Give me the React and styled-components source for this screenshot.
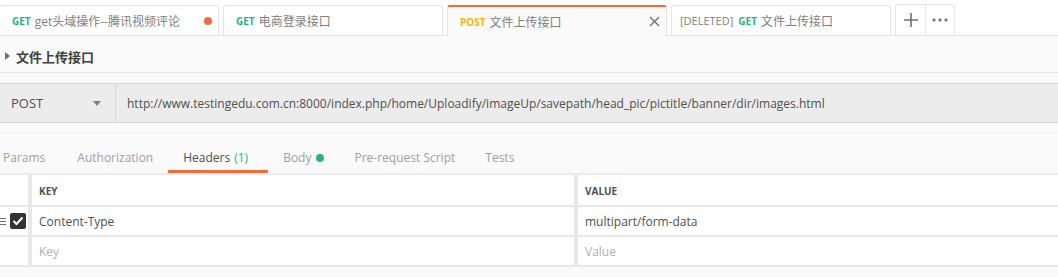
import React from 'react'
import styled, { createGlobalStyle } from 'styled-components'

const GlobalStyle = createGlobalStyle`
  body {
    margin: 0;
    background: #fafafa;
    font-family: "Open Sans", "Noto Sans CJK SC", sans-serif;
    overflow: hidden;
  }
`

const Page = styled.div`
  width: 1058px;
  height: 277px;
  background: #fafafa;
  overflow: hidden;
`

const TabBar = styled.div`
  display: flex;
  align-items: flex-end;
  height: 36px;
  padding-top: 6px;
  box-sizing: border-box;
  background: #fff;
  border-bottom: 1px solid #e4e4e4;
  margin-left: -1px;
`

const Tab = styled.div`
  display: flex;
  align-items: center;
  width: 220px;
  height: ${p => (p.active ? 31 : 30)}px;
  margin-bottom: ${p => (p.active ? -1 : 0)}px;
  margin-right: 4px;
  box-sizing: border-box;
  padding: 0 6px 0 ${p => (p.deleted ? 8 : 12)}px;
  background: ${p => (p.active ? '#fafafa' : '#fff')};
  border: 1px solid #e4e4e4;
  border-bottom: none;
  border-top: ${p => (p.active ? '2px solid #f26b3a' : '1px solid #e4e4e4')};
  border-radius: 3px 3px 0 0;
  white-space: nowrap;
`

const Method = styled.span`
  font-size: 10px;
  font-weight: 700;
  color: ${p => p.color};
  margin-right: 4px;
`

const Deleted = styled.span`
  color: #808080;
  font-size: 11px;
  margin-right: 5px;
`

const TabName = styled.span`
  flex: 1;
  font-size: 12px;
  color: #808080;
`

const Dot = styled.span`
  width: 8px;
  height: 8px;
  border-radius: 50%;
  background: ${p => p.color};
  display: inline-block;
  margin-left: ${p => p.gap || 0}px;
`

const Close = styled.span`
  display: flex;
`

const ActionGroup = styled.div`
  display: flex;
  height: 30px;
  border: 1px solid #e4e4e4;
  border-bottom: none;
  border-radius: 3px 3px 0 0;
  background: #fff;
`

const ActionButton = styled.div`
  width: ${p => p.w}px;
  display: flex;
  align-items: center;
  justify-content: center;
  border-right: ${p => (p.divider ? '1px solid #e4e4e4' : 'none')};
`

const TitleRow = styled.div`
  display: flex;
  align-items: center;
  height: 37px;
  padding: 4px 0 0 5px;
  border-bottom: 1px solid #e4e4e4;
  box-sizing: border-box;
`

const Caret = styled.span`
  width: 0;
  height: 0;
  border-top: 4px solid transparent;
  border-bottom: 4px solid transparent;
  border-left: 5px solid #707070;
  margin-right: 6px;
`

const Title = styled.span`
  font-size: 13px;
  font-weight: 700;
  color: #404040;
`

const UrlBar = styled.div`
  display: flex;
  height: 40px;
  margin-top: 10px;
  box-sizing: border-box;
  background: #ececec;
  border-top: 1px solid #d4d4d4;
  border-bottom: 1px solid #d4d4d4;
`

const MethodSelect = styled.div`
  width: 116px;
  display: flex;
  align-items: center;
  justify-content: space-between;
  box-sizing: border-box;
  padding: 0 14px 0 11px;
  border-right: 1px solid #d4d4d4;
  font-size: 13px;
  color: #505050;
`

const SelectCaret = styled.span`
  width: 0;
  height: 0;
  border-left: 4px solid transparent;
  border-right: 4px solid transparent;
  border-top: 5px solid #808080;
`

const UrlText = styled.div`
  display: flex;
  align-items: center;
  padding-left: 11px;
  font-size: 12px;
  color: #505050;
`

const NavRow = styled.div`
  display: flex;
  height: 41px;
  margin-top: 10px;
  box-sizing: border-box;
  border-top: 1px solid #efefef;
  border-bottom: 1px solid #ececec;
`

const NavItem = styled.div`
  display: flex;
  align-items: center;
  height: 100%;
  box-sizing: border-box;
  padding-top: 11px;
  padding-left: ${p => (p.first ? 3 : 15)}px;
  padding-right: ${p => (p.first ? 17 : p.active ? 20 : 15)}px;
  font-size: 12px;
  color: ${p => (p.active ? '#505050' : '#a0a0a0')};
  border-bottom: 3px solid ${p => (p.active ? '#f26b3a' : 'transparent')};
  white-space: nowrap;
`

const Count = styled.span`
  color: #26b47f;
  margin-left: 4px;
`

const Table = styled.div`
  display: grid;
  grid-template-columns: 28px 542px 1fr;
  grid-template-rows: 30px 28px 28px;
  column-gap: 4px;
  row-gap: 2px;
  background: #e8e8e8;
  border-top: 1px solid #ececec;
  border-bottom: 2px solid #e8e8e8;
`

const Cell = styled.div`
  display: flex;
  align-items: center;
  padding-left: ${p => (p.lead ? 0 : 7)}px;
  padding-top: ${p => (p.head ? 1 : 0)}px;
  background: #fff;
  font-size: ${p => (p.head ? 10 : 12)}px;
  font-weight: ${p => (p.head ? 700 : 400)};
  color: ${p => (p.placeholder ? '#b0b0b0' : '#505050')};
  gap: 4px;
`

const Handle = styled.span`
  display: flex;
  flex-direction: column;
  gap: 2px;
  width: 6px;
  span {
    height: 1px;
    background: #707070;
  }
`

const Check = styled.span`
  width: 16px;
  height: 16px;
  border-radius: 2px;
  background: #333;
  display: flex;
  align-items: center;
  justify-content: center;
`

const tabs = [
  { method: 'GET', color: '#26b47f', name: 'get头域操作--腾讯视频评论', dot: true },
  { method: 'GET', color: '#26b47f', name: '电商登录接口' },
  { method: 'POST', color: '#ffb400', name: '文件上传接口', active: true },
  { method: 'GET', color: '#26b47f', name: '文件上传接口', deleted: true }
]

const navItems = [
  { label: 'Params', first: true },
  { label: 'Authorization' },
  { label: 'Headers', active: true, count: '(1)' },
  { label: 'Body', dot: true },
  { label: 'Pre-request Script' },
  { label: 'Tests' }
]

export default function App() {
  return (
    <Page>
      <GlobalStyle />
      <TabBar>
        {tabs.map((t, i) => (
          <Tab key={i} active={t.active} deleted={t.deleted}>
            {t.deleted && <Deleted>[DELETED]</Deleted>}
            <Method color={t.color}>{t.method}</Method>
            <TabName>{t.name}</TabName>
            {t.dot && <Dot color="#f26b3a" />}
            {t.active && (
              <Close>
                <svg width="11" height="11" viewBox="0 0 11 11">
                  <path d="M1 1L10 10M10 1L1 10" stroke="#707070" strokeWidth="1.4" />
                </svg>
              </Close>
            )}
          </Tab>
        ))}
        <ActionGroup>
          <ActionButton w={29} divider>
            <svg width="14" height="14" viewBox="0 0 14 14">
              <path d="M7 0V14M0 7H14" stroke="#707070" strokeWidth="1.6" />
            </svg>
          </ActionButton>
          <ActionButton w={28}>
            <svg width="16" height="4" viewBox="0 0 16 4">
              <circle cx="2" cy="2" r="1.7" fill="#808080" />
              <circle cx="8" cy="2" r="1.7" fill="#808080" />
              <circle cx="14" cy="2" r="1.7" fill="#808080" />
            </svg>
          </ActionButton>
        </ActionGroup>
      </TabBar>

      <TitleRow>
        <Caret />
        <Title>文件上传接口</Title>
      </TitleRow>

      <UrlBar>
        <MethodSelect>
          POST
          <SelectCaret />
        </MethodSelect>
        <UrlText>
          http://www.testingedu.com.cn:8000/index.php/home/Uploadify/imageUp/savepath/head_pic/pictitle/banner/dir/images.html
        </UrlText>
      </UrlBar>

      <NavRow>
        {navItems.map(n => (
          <NavItem key={n.label} first={n.first} active={n.active}>
            {n.label}
            {n.count && <Count>{n.count}</Count>}
            {n.dot && <Dot color="#26b47f" gap={5} />}
          </NavItem>
        ))}
      </NavRow>

      <Table>
        <Cell head lead />
        <Cell head>KEY</Cell>
        <Cell head>VALUE</Cell>

        <Cell lead>
          <Handle>
            <span />
            <span />
            <span />
          </Handle>
          <Check>
            <svg width="12" height="10" viewBox="0 0 12 10">
              <path d="M1.5 5L4.5 8L10.5 1.5" stroke="#fff" strokeWidth="2" fill="none" />
            </svg>
          </Check>
        </Cell>
        <Cell>Content-Type</Cell>
        <Cell>multipart/form-data</Cell>

        <Cell lead />
        <Cell placeholder>Key</Cell>
        <Cell placeholder>Value</Cell>
      </Table>
    </Page>
  )
}
